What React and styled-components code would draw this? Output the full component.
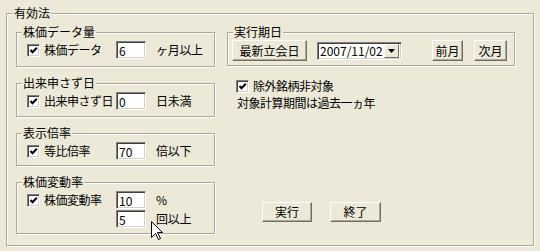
import styled, { createGlobalStyle } from "styled-components";

const GlobalStyle = createGlobalStyle`
  * {
    box-sizing: border-box;
  }
  body {
    margin: 0;
    background: #ece9d8;
    font-family: "Noto Sans CJK JP", "MS UI Gothic", sans-serif;
    font-size: 12px;
    line-height: 14px;
    color: #000;
  }
`;

const Page = styled.div`
  position: relative;
  width: 540px;
  height: 251px;
  padding: 6px 0 0 6px;
`;

const Group = styled.fieldset`
  margin: 0;
  padding: 0;
  min-width: 0;
  width: ${(p) => p.$w}px;
  height: ${(p) => p.$h}px;
  border: 1px solid #aca899;
  box-shadow: inset 1px 1px 0 #fff, 1px 1px 0 #fff;
`;

const Title = styled.legend`
  margin-left: ${(p) => p.$indent || 5}px;
  padding: 0 1px;
  background: #ece9d8;
  line-height: 14px;
`;

const Body = styled.div`
  display: flex;
  gap: 12px;
  padding: 5px 0 0 9px;
`;

const LeftColumn = styled.div`
  display: flex;
  flex-direction: column;
  gap: 9px;
  width: 199px;
`;

const RightColumn = styled.div`
  display: flex;
  flex-direction: column;
  width: 288px;
`;

const Rows = styled.div`
  display: flex;
  flex-direction: column;
  gap: 1px;
  padding: 2px 0 0 10px;
`;

const Row = styled.div`
  display: grid;
  grid-template-columns: 89px 30px auto;
  align-items: center;
  height: 18px;
`;

const CheckLabel = styled.label`
  display: flex;
  align-items: center;
  gap: 4px;
  white-space: nowrap;
  letter-spacing: -0.5px;
`;

const Box = styled.span`
  display: inline-flex;
  align-items: center;
  justify-content: center;
  width: 13px;
  height: 13px;
  flex: none;
  background: #fff;
  border: 1px solid;
  border-color: #808080 #fff #fff #808080;
  box-shadow: inset 1px 1px 0 #404040, inset -1px -1px 0 #d4d0c8;
`;

const Field = styled.input`
  width: 30px;
  height: 18px;
  padding: 0 2px;
  margin: 0;
  font: inherit;
  color: #000;
  background: #fff;
  border: 1px solid;
  border-color: #808080 #fff #fff #808080;
  box-shadow: inset 1px 1px 0 #404040, inset -1px -1px 0 #d4d0c8;
  outline: none;
`;

const Unit = styled.span`
  margin-left: 10px;
  white-space: nowrap;
  letter-spacing: -0.3px;
`;

const Toolbar = styled.div`
  display: flex;
  align-items: center;
  padding: 1px 0 0 4px;
`;

const Button = styled.button`
  width: ${(p) => p.$w}px;
  height: ${(p) => p.$h || 21}px;
  margin: 0 0 0 ${(p) => p.$gap || 0}px;
  padding: 0;
  font: inherit;
  color: #000;
  background: #ece9d8;
  border: 1px solid;
  border-color: #fff #716f64 #716f64 #fff;
  box-shadow: inset -1px -1px 0 #aca899;
  white-space: nowrap;
`;

const Combo = styled.div`
  display: flex;
  align-items: center;
  width: 85px;
  height: 18px;
  margin-left: 10px;
  padding: 0 2px 0 2px;
  background: #fff;
  border: 1px solid;
  border-color: #808080 #fff #fff #808080;
  box-shadow: inset 1px 1px 0 #404040, inset -1px -1px 0 #d4d0c8;
`;

const ComboText = styled.span`
  flex: 1;
`;

const DropButton = styled.span`
  display: flex;
  align-items: center;
  justify-content: center;
  width: 15px;
  height: 14px;
  background: #ece9d8;
  border: 1px solid;
  border-color: #fff #716f64 #716f64 #fff;
`;

const Option = styled.div`
  margin-top: 13px;
  padding-left: 9px;
`;

const Note = styled.div`
  margin-top: 3px;
  padding-left: 10px;
  white-space: nowrap;
  letter-spacing: -0.5px;
`;

const ActionBar = styled.div`
  display: flex;
  gap: 18px;
  margin-top: auto;
  margin-bottom: 12px;
  padding-left: 35px;
`;

const Pointer = styled.svg`
  position: absolute;
  left: 151px;
  top: 221px;
`;

function Check({ children }) {
  return (
    <CheckLabel>
      <Box>
        <svg width="9" height="9" viewBox="0 0 9 9">
          <path d="M1.5 4 L3.5 6.2 L7.8 1.8" fill="none" stroke="#000" strokeWidth="2" />
        </svg>
      </Box>
      {children}
    </CheckLabel>
  );
}

function Setting({ title, h, label, value, unit }) {
  return (
    <Group $w={199} $h={h}>
      <Title>{title}</Title>
      <Rows>
        <Row>
          <Check>{label}</Check>
          <Field defaultValue={value} />
          <Unit>{unit}</Unit>
        </Row>
      </Rows>
    </Group>
  );
}

export default function App() {
  return (
    <Page>
      <GlobalStyle />
      <Group $w={528} $h={240}>
        <Title $indent={6}>有効法</Title>
        <Body>
          <LeftColumn>
            <Setting title="株価データ量" h={42} label="株価データ" value="6" unit="ヶ月以上" />
            <Setting title="出来申さず日" h={41} label="出来申さず日" value="0" unit="日未満" />
            <Setting title="表示倍率" h={40} label="等比倍率" value="70" unit="倍以下" />
            <Group $w={199} $h={59}>
              <Title>株価変動率</Title>
              <Rows>
                <Row>
                  <Check>株価変動率</Check>
                  <Field defaultValue="10" />
                  <Unit>%</Unit>
                </Row>
                <Row>
                  <span />
                  <Field defaultValue="5" />
                  <Unit>回以上</Unit>
                </Row>
              </Rows>
            </Group>
          </LeftColumn>

          <RightColumn>
            <Group $w={288} $h={41}>
              <Title>実行期日</Title>
              <Toolbar>
                <Button $w={75}>最新立会日</Button>
                <Combo>
                  <ComboText>2007/11/02</ComboText>
                  <DropButton>
                    <svg width="7" height="4" viewBox="0 0 7 4">
                      <path d="M0 0 H7 L3.5 4 Z" fill="#000" />
                    </svg>
                  </DropButton>
                </Combo>
                <Button $w={31} $gap={30}>前月</Button>
                <Button $w={33} $gap={11}>次月</Button>
              </Toolbar>
            </Group>
            <Option>
              <Check>除外銘柄非対象</Check>
            </Option>
            <Note>対象計算期間は過去一ヵ年</Note>
            <ActionBar>
              <Button $w={50} $h={20}>実行</Button>
              <Button $w={51} $h={20}>終了</Button>
            </ActionBar>
          </RightColumn>
        </Body>
      </Group>
      <Pointer width="12" height="20" viewBox="0 0 12 20">
        <path
          d="M0.5 0.5 V16.5 L4.5 12.5 L7.5 18.5 L9.5 17.5 L6.5 11.5 H11.5 Z"
          fill="#fff"
          stroke="#000"
          strokeWidth="1"
        />
      </Pointer>
    </Page>
  );
}
